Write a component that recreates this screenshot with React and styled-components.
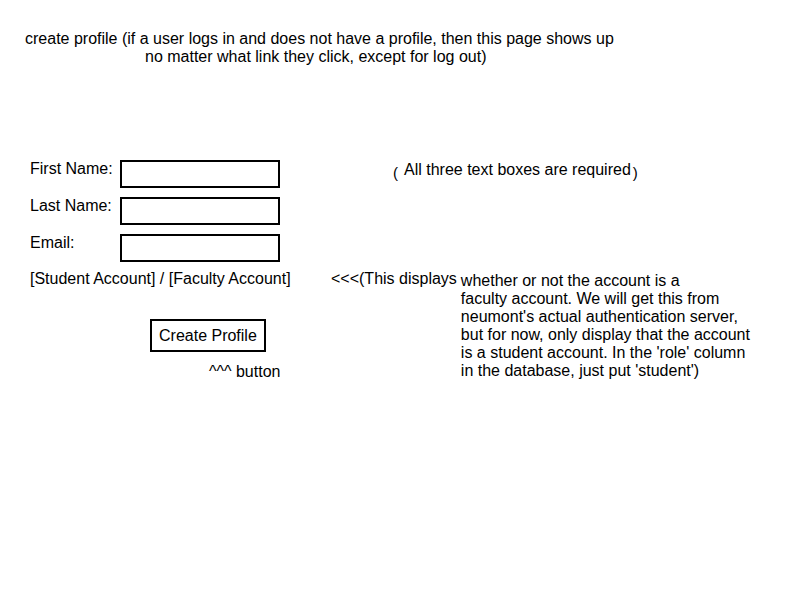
import React from "react";
import styled, { createGlobalStyle } from "styled-components";

const GlobalStyle = createGlobalStyle`
  *, *::before, *::after { box-sizing: border-box; }
  body {
    margin: 0;
    background: #fff;
    color: #000;
    font: 16px/18px "Liberation Sans", Arial, sans-serif;
  }
`;

const Page = styled.main`
  padding: 30px 25px;
`;

const Heading = styled.h1`
  margin: 0 0 94px;
  font-size: 16px;
  line-height: 18px;
  font-weight: 400;
`;

const HeadingLine = styled.span`
  display: block;
  padding-left: ${(p) => (p.$indented ? "120px" : "0")};
`;

const Form = styled.form`
  padding-left: 5px;
`;

const Columns = styled.div`
  display: grid;
  grid-template-columns: 301px 1fr;
`;

const Fields = styled.div`
  display: grid;
  gap: 9px;
  padding-bottom: 8px;
`;

const Field = styled.div`
  display: flex;
  align-items: flex-start;
`;

const Label = styled.label`
  flex: 0 0 90px;
`;

const TextBox = styled.input`
  width: 160px;
  height: 28px;
  padding: 2px 6px;
  border: 2px solid #000;
  border-radius: 0;
  background: #fff;
  color: #000;
  font: inherit;
`;

const Required = styled.p`
  display: flex;
  align-items: flex-start;
  margin: 0;
  padding: 1px 0 0 62px;
`;

const RequiredText = styled.span`
  padding: 0 2px 0 6px;
`;

const Paren = styled.span`
  padding-top: 3px;
  font-size: 15px;
`;

const Actions = styled.div`
  display: flex;
  flex-direction: column;
  align-items: flex-start;
`;

const Account = styled.p`
  margin: 0 0 31px;
`;

const CreateButton = styled.button`
  height: 33px;
  margin: 0 0 11px 120px;
  padding: 0 7px;
  border: 2px solid #000;
  border-radius: 0;
  background: #fff;
  color: #000;
  font: inherit;
`;

const ButtonNote = styled.p`
  margin: 0 0 0 179px;
`;

const Note = styled.div`
  display: flex;
  align-items: flex-start;
  gap: 4px;
`;

const NoteText = styled.p`
  margin: 0;
  padding-top: 2px;
  max-width: 296px;
`;

const NoteLead = styled.span`
  white-space: nowrap;
`;

export default function App() {
  return (
    <>
      <GlobalStyle />
      <Page>
        <Heading>
          <HeadingLine>
            create profile (if a user logs in and does not have a profile, then this page shows up
          </HeadingLine>
          <HeadingLine $indented>no matter what link they click, except for log out)</HeadingLine>
        </Heading>
        <Form onSubmit={(e) => e.preventDefault()}>
          <Columns>
            <Fields>
              <Field>
                <Label htmlFor="first">First Name:</Label>
                <TextBox id="first" required />
              </Field>
              <Field>
                <Label htmlFor="last">Last Name:</Label>
                <TextBox id="last" required />
              </Field>
              <Field>
                <Label htmlFor="email">Email:</Label>
                <TextBox id="email" type="email" required />
              </Field>
            </Fields>
            <Required>
              <Paren>(</Paren>
              <RequiredText>All three text boxes are required</RequiredText>
              <Paren>)</Paren>
            </Required>
            <Actions>
              <Account>[Student Account] / [Faculty Account]</Account>
              <CreateButton type="submit">Create Profile</CreateButton>
              <ButtonNote>^^^ button</ButtonNote>
            </Actions>
            <Note>
              <NoteLead>&lt;&lt;&lt;(This displays</NoteLead>
              <NoteText>
                whether or not the account is a<br />
                faculty account. We will get this from neumont's actual authentication server, but
                for now, only display that the account is a student account. In the 'role' column in
                the database, just put 'student')
              </NoteText>
            </Note>
          </Columns>
        </Form>
      </Page>
    </>
  );
}
